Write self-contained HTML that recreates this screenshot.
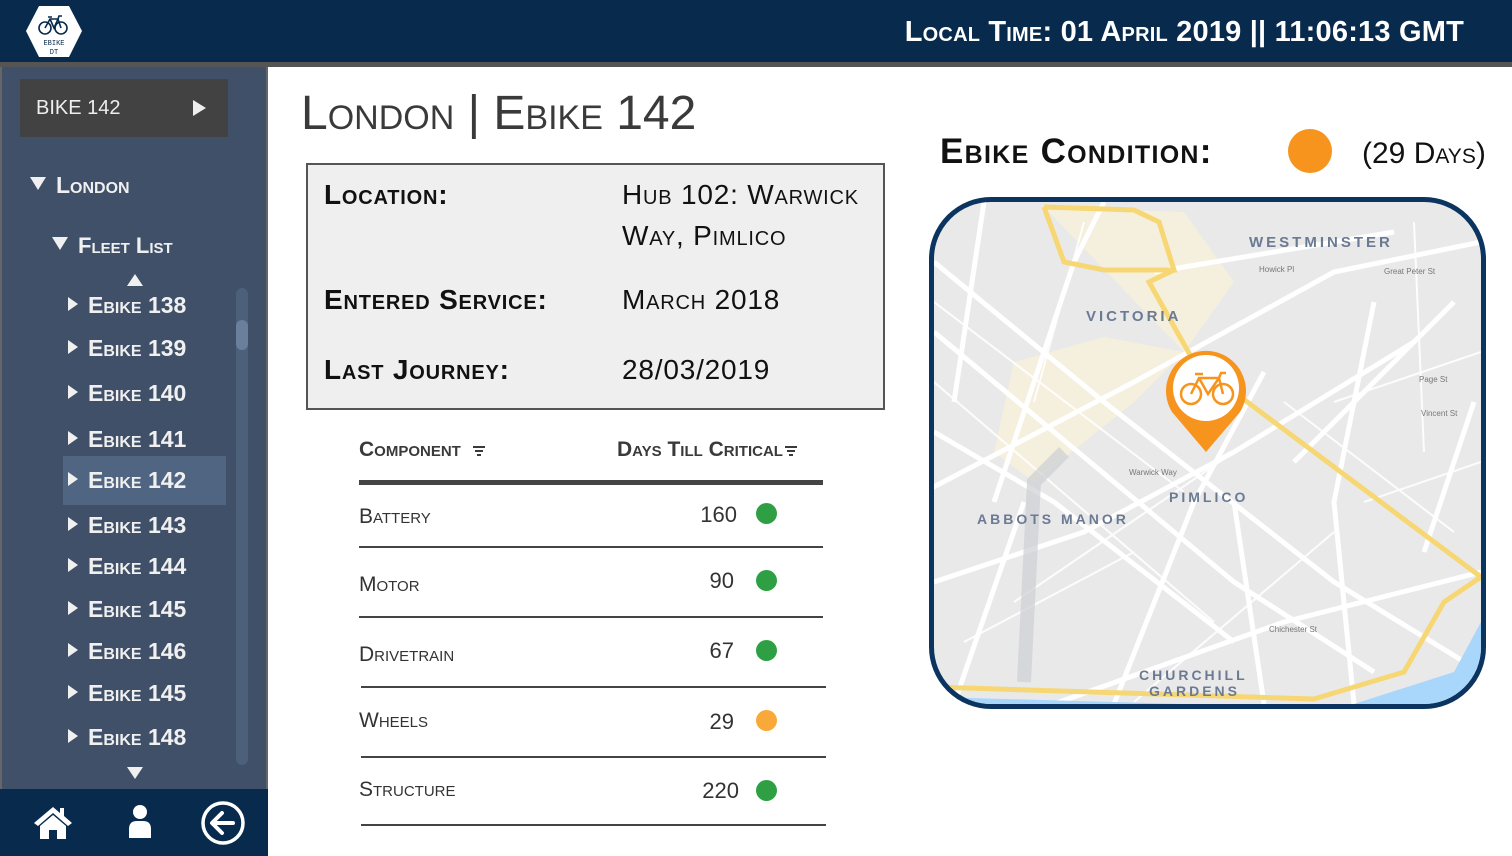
<!DOCTYPE html>
<html><head><meta charset="utf-8"><style>
*{margin:0;padding:0;box-sizing:border-box}
body{width:1512px;height:856px;overflow:hidden;background:#fff;font-family:"Liberation Sans",sans-serif;position:relative}
#hdr{position:absolute;left:0;top:0;width:1512px;height:62px;background:#072a4d}
#hdr .t{position:absolute;right:48px;top:16px;color:#fff;font-size:29px;font-weight:bold;font-variant:small-caps;letter-spacing:0.2px}
#line{position:absolute;left:0;top:62px;width:1512px;height:5px;background:#555}
#side{position:absolute;left:0;top:67px;width:268px;height:789px;background:#3f5068;border-left:2px solid #666;border-right:2px solid #666}
#bikebtn{position:absolute;left:18px;top:12px;width:208px;height:58px;background:#424242;border-radius:2px;color:#eee;font-size:20px;line-height:58px;padding-left:16px}
#bikebtn:after{content:"";position:absolute;right:22px;top:21px;border-left:13px solid #eee;border-top:8px solid transparent;border-bottom:8px solid transparent}
.it{position:absolute;color:#f0f0f0;font-weight:bold;font-variant:small-caps;font-size:23px}
.tri{display:inline-block;width:0;height:0;border-left:10px solid #f0f0f0;border-top:7px solid transparent;border-bottom:7px solid transparent;margin-right:10px;vertical-align:2px}
.dtri{display:inline-block;width:0;height:0;border-top:13px solid #f0f0f0;border-left:8px solid transparent;border-right:8px solid transparent;margin-right:10px;vertical-align:3px}
#foot{position:absolute;left:0;top:789px;width:268px;height:67px;background:#072a4d}
h1{position:absolute;left:301px;top:86px;font-size:48px;font-weight:normal;font-variant:small-caps;color:#3a3a3a}
#info{position:absolute;left:306px;top:163px;width:579px;height:247px;background:#efefef;border:2px solid #555}
.lab{position:absolute;left:16px;font-size:28px;font-weight:bold;font-variant:small-caps;color:#111;letter-spacing:0.8px}
.val{position:absolute;left:314px;font-size:28px;font-variant:small-caps;color:#111;line-height:41px;letter-spacing:0.8px}
.th{position:absolute;top:438px;font-size:21px;font-weight:bold;font-variant:small-caps;color:#3a3a3a}
.fi{display:inline-block;width:12px;height:9px;border-top:2px solid #3a3a3a;position:relative;margin-left:6px;vertical-align:1px}
.fi:before{content:"";position:absolute;left:2px;top:2px;width:8px;border-top:2px solid #3a3a3a}
.fi:after{content:"";position:absolute;left:4px;top:6px;width:4px;border-top:2px solid #3a3a3a}
.row{position:absolute;left:359px;width:464px;font-size:21px;font-variant:small-caps;color:#333}
.num{position:absolute;font-size:22px;color:#333;text-align:right;width:60px}
.dot{position:absolute;width:21px;height:21px;border-radius:50%}
.hl{position:absolute;height:2px;background:#444}
#cond{position:absolute;left:940px;top:132px;font-size:35px;font-weight:bold;font-variant:small-caps;color:#111;letter-spacing:1.3px}
#map{position:absolute;left:929px;top:197px;width:557px;height:512px;border:5px solid #0c3460;border-radius:62px;overflow:hidden;background:#e9e9ea}
</style></head><body>
<div id="hdr">
<svg style="position:absolute;left:25px;top:5px" width="58" height="53" viewBox="0 0 58 53"><polygon points="14,1 44,1 57,26 44,52 14,52 1,26" fill="#fff"/>
<g fill="none" stroke="#072a4d" stroke-width="1.6"><circle cx="20" cy="23" r="6"/><circle cx="36" cy="23" r="6"/><path d="M20 23 L25 14 L33 14 L36 23 M25 14 L29 23 L33 14 M23 12h4 M33 14 l1-3h3"/></g>
<text x="29" y="40" font-size="7" text-anchor="middle" fill="#072a4d" font-family="Liberation Mono">EBIKE</text><text x="29" y="49" font-size="7" text-anchor="middle" fill="#072a4d" font-family="Liberation Mono">DT</text></svg>
<div class="t">Local Time: 01 April 2019 || 11:06:13 GMT</div></div>
<div id="line"></div>
<div id="side">
<div id="bikebtn">BIKE 142</div>
<div class="it" style="left:28px;top:105px"><span class="dtri"></span>London</div>
<div class="it" style="left:50px;top:166px;font-size:22px"><span class="dtri"></span>Fleet List</div>
<div style="position:absolute;left:125px;top:207px;border-bottom:12px solid #f0f0f0;border-left:8px solid transparent;border-right:8px solid transparent"></div>
<div style="position:absolute;left:234px;top:221px;width:12px;height:477px;border-radius:6px;background:#4d607a"></div>
<div style="position:absolute;left:234px;top:253px;width:12px;height:30px;border-radius:6px;background:#6a7f9c"></div>
<div style="position:absolute;left:61px;top:389px;width:163px;height:49px;background:#4f6582"></div>
<div class="it" style="left:66px;top:225px"><span class="tri"></span>Ebike 138</div>
<div class="it" style="left:66px;top:268px"><span class="tri"></span>Ebike 139</div>
<div class="it" style="left:66px;top:313px"><span class="tri"></span>Ebike 140</div>
<div class="it" style="left:66px;top:359px"><span class="tri"></span>Ebike 141</div>
<div class="it" style="left:66px;top:400px"><span class="tri"></span>Ebike 142</div>
<div class="it" style="left:66px;top:445px"><span class="tri"></span>Ebike 143</div>
<div class="it" style="left:66px;top:486px"><span class="tri"></span>Ebike 144</div>
<div class="it" style="left:66px;top:529px"><span class="tri"></span>Ebike 145</div>
<div class="it" style="left:66px;top:571px"><span class="tri"></span>Ebike 146</div>
<div class="it" style="left:66px;top:613px"><span class="tri"></span>Ebike 145</div>
<div class="it" style="left:66px;top:657px"><span class="tri"></span>Ebike 148</div>
<div style="position:absolute;left:125px;top:700px;border-top:12px solid #f0f0f0;border-left:8px solid transparent;border-right:8px solid transparent"></div>
</div>
<div id="foot">
<svg style="position:absolute;left:33px;top:16px" width="40" height="34" viewBox="0 0 40 34"><path d="M20 2 L1 18 L5 21 L20 8 L35 21 L39 18 L31 11 V3 H27 V8 Z" fill="#fff"/><path d="M7 21 L20 10 L33 21 V34 H24 V25 H16 V34 H7 Z" fill="#fff"/></svg>
<svg style="position:absolute;left:128px;top:15px" width="24" height="34" viewBox="0 0 24 34"><circle cx="12" cy="8" r="7" fill="#fff"/><path d="M1 34 V25 Q1 17 9 17 H15 Q23 17 23 25 V34 Z" fill="#fff"/></svg>
<svg style="position:absolute;left:200px;top:11px" width="46" height="46" viewBox="0 0 46 46"><circle cx="23" cy="23" r="20" fill="none" stroke="#fff" stroke-width="3.5"/><path d="M33 23 H13 M22 13 L12 23 L22 33" fill="none" stroke="#fff" stroke-width="4" stroke-linecap="round" stroke-linejoin="round"/></svg>
</div>
<h1>London | Ebike 142</h1>
<div id="info">
<div class="lab" style="top:14px">Location:</div>
<div class="val" style="top:9px">Hub 102: Warwick<br>Way, Pimlico</div>
<div class="lab" style="top:119px">Entered Service:</div>
<div class="val" style="top:114px">March 2018</div>
<div class="lab" style="top:189px">Last Journey:</div>
<div class="val" style="top:184px">28/03/2019</div>
</div>
<div class="th" style="left:359px">Component <span class="fi"></span></div>
<div class="th" style="left:617px">Days Till Critical<span class="fi" style="margin-left:2px"></span></div>
<div class="hl" style="left:359px;top:480px;width:464px;height:5px;background:#444"></div>
<div class="row" style="top:505px">Battery</div><div class="num" style="left:677px;top:502px">160</div><div class="dot" style="left:756px;top:503px;background:#2ea043"></div>
<div class="hl" style="left:359px;top:546px;width:464px"></div>
<div class="row" style="top:573px">Motor</div><div class="num" style="left:674px;top:568px">90</div><div class="dot" style="left:756px;top:570px;background:#2ea043"></div>
<div class="hl" style="left:359px;top:616px;width:464px"></div>
<div class="row" style="top:643px">Drivetrain</div><div class="num" style="left:674px;top:638px">67</div><div class="dot" style="left:756px;top:640px;background:#2ea043"></div>
<div class="hl" style="left:361px;top:686px;width:465px"></div>
<div class="row" style="top:709px">Wheels</div><div class="num" style="left:674px;top:709px">29</div><div class="dot" style="left:756px;top:710px;background:#f9a83a"></div>
<div class="hl" style="left:361px;top:756px;width:465px"></div>
<div class="row" style="top:778px">Structure</div><div class="num" style="left:679px;top:778px">220</div><div class="dot" style="left:756px;top:780px;background:#2ea043"></div>
<div class="hl" style="left:361px;top:824px;width:465px"></div>
<div id="cond">Ebike Condition:</div>
<div style="position:absolute;left:1288px;top:129px;width:44px;height:44px;border-radius:50%;background:#f7941d"></div>
<div style="position:absolute;left:1362px;top:137px;font-size:30px;font-variant:small-caps;color:#111">(29 Days)</div>
<div id="map">
<svg width="547" height="502" viewBox="0 0 547 502" style="position:absolute;left:0;top:0">
<path d="M110 5 L250 10 L300 80 L250 150 L170 135 L80 160 L60 250 L100 280 L200 200 L250 150" fill="#f6efdc" opacity="0.9"/>
<g stroke="#fff" stroke-width="5" fill="none">
<path d="M0 60 L170 200 L400 380 L547 470"/><path d="M0 130 L300 380 L440 470"/><path d="M0 230 L120 300 L300 440"/>
<path d="M-10 290 L200 180 L400 70 L547 40"/><path d="M0 380 L150 330 L300 250 L480 140"/><path d="M120 502 L350 420 L547 370"/>
<path d="M60 300 L140 60 L170 0"/><path d="M180 502 L260 300 L330 170"/><path d="M330 502 L300 300"/><path d="M420 502 L400 300 L440 100"/>
<path d="M20 502 L90 300"/><path d="M490 350 L540 200"/><path d="M220 70 L460 30"/><path d="M50 0 L20 200"/><path d="M360 260 L520 100"/>
</g>
<g stroke="#fff" stroke-width="2" fill="none" opacity="0.9">
<path d="M0 100 L250 290"/><path d="M0 180 L280 420"/><path d="M80 400 L300 250"/><path d="M200 500 L400 330"/><path d="M350 200 L520 330"/><path d="M30 440 L200 350"/><path d="M400 200 L547 150"/><path d="M150 20 L100 200"/><path d="M480 20 L490 250"/><path d="M430 300 L547 260"/>
</g>
<path d="M90 480 L100 280 L130 250" stroke="#ccced3" stroke-width="14" fill="none" opacity="0.7"/>
<g stroke="#f7d774" stroke-width="5" fill="none">
<path d="M110 5 L130 60 L170 68 L240 68 L225 20 L200 8 L110 5"/><path d="M240 68 L215 80 L260 160 L300 190 L547 375"/>
<path d="M547 375 L510 400 L470 470 L380 497 L0 485"/>
</g>
<path d="M420 502 L520 470 L547 420 L547 502 Z" fill="#a9d6fb"/><path d="M0 495 L250 502 L0 502 Z" fill="#a9d6fb"/>
<g font-family="Liberation Sans" font-weight="bold" fill="#6b7a93" letter-spacing="3">
<text x="315" y="45" font-size="15">WESTMINSTER</text><text x="152" y="119" font-size="15">VICTORIA</text>
<text x="235" y="300" font-size="14">PIMLICO</text><text x="43" y="322" font-size="14">ABBOTS MANOR</text>
<text x="205" y="478" font-size="14">CHURCHILL</text><text x="215" y="494" font-size="14">GARDENS</text>
</g>
<g font-family="Liberation Sans" fill="#777" font-size="8">
<text x="325" y="70">Howick Pl</text><text x="450" y="72">Great Peter St</text><text x="485" y="180">Page St</text><text x="487" y="214">Vincent St</text>
<text x="195" y="273">Warwick Way</text><text x="335" y="430">Chichester St</text>
</g>
<path d="M272 250 L238 210 A40 40 0 1 1 306 210 Z" fill="#f7941d"/>
<circle cx="272" cy="186" r="33" fill="#fff"/>
<g fill="none" stroke="#f7941d" stroke-width="2.5"><circle cx="257" cy="192" r="10"/><circle cx="289" cy="192" r="10"/><path d="M257 192 L265 176 L285 176 L289 192 M265 176 L274 192 L285 176 M261 172h8 M285 176 l2-5h5"/></g>
</svg></div>
</body></html>
